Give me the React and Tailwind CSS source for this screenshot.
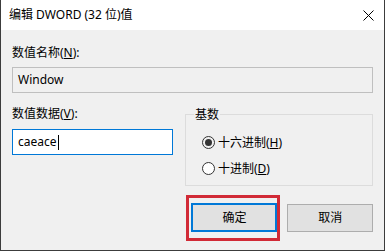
import React from "react";

const font = { fontFamily: '"Segoe UI", "Noto Sans", "Noto Sans CJK SC", sans-serif' };

export default function App() {
  return (
    <div
      className="w-[385px] h-[251px] bg-[#f0f0f0] border border-t-0 border-[#3c3c3c] flex flex-col text-[12px] text-black overflow-hidden"
      style={font}
    >
      <div className="h-[30px] bg-white flex items-center justify-between pl-[8px] pr-[10px] shrink-0">
        <span className="text-[12px] leading-none">编辑 DWORD (32 位)值</span>
        <svg width="11" height="11" viewBox="0 0 11 11">
          <path d="M0.5 0.5 L10.5 10.5 M10.5 0.5 L0.5 10.5" stroke="#000" strokeWidth="1" />
        </svg>
      </div>
      <div className="flex flex-col pl-[11px] pr-[11px]">
        <div className="mt-[14px] h-[17px] flex items-center leading-none">
          数值名称(<span className="underline">N</span>):
        </div>
        <div className="mt-[6px] h-[26px] border border-[#bfbfbf] bg-[#f0f0f0] flex items-center pl-[5px] w-[361px] leading-none">
          Window
        </div>
        <div className="flex mt-[12px]">
          <div className="flex flex-col w-[174px]">
            <div className="h-[17px] flex items-center leading-none">
              数值数据(<span className="underline">V</span>):
            </div>
            <div className="mt-[7px] h-[26px] w-[161px] border border-[#0078d7] bg-white flex items-center pl-[5px] leading-none">
              caeace
              <span className="inline-block w-[1px] h-[15px] bg-black ml-[1px]"></span>
            </div>
          </div>
          <div className="relative mt-[9px] w-[189px] h-[72px] border border-[#dcdcdc] flex flex-col pl-[16px]">
            <div className="absolute left-[8px] -top-[9px] bg-[#f0f0f0] px-[1px] leading-none h-[17px] flex items-center">基数</div>
            <div className="mt-[19px] flex items-center h-[17px]">
              <span className="w-[13px] h-[13px] rounded-full border border-[#333] flex items-center justify-center">
                <span className="w-[7px] h-[7px] rounded-full bg-[#333]"></span>
              </span>
              <span className="ml-[3px] leading-none">十六进制(<span className="underline">H</span>)</span>
            </div>
            <div className="mt-[9px] flex items-center h-[17px]">
              <span className="w-[13px] h-[13px] rounded-full border border-[#333] bg-white"></span>
              <span className="ml-[3px] leading-none">十进制(<span className="underline">D</span>)</span>
            </div>
          </div>
        </div>
        <div className="flex mt-[9px] ml-[174px]">
          <div className="border-[3px] border-[#d12a36] w-[95px] h-[46px] flex items-start justify-end">
            <div className="mt-[5px] w-[86px] h-[29px] border-2 border-[#0078d7] bg-[#e1e1e1] flex items-center justify-center leading-none">
              确定
            </div>
          </div>
          <div className="ml-[7px] mt-[9px] w-[86px] h-[28px] border border-[#adadad] bg-[#e1e1e1] flex items-center justify-center leading-none">
            取消
          </div>
        </div>
      </div>
    </div>
  );
}
